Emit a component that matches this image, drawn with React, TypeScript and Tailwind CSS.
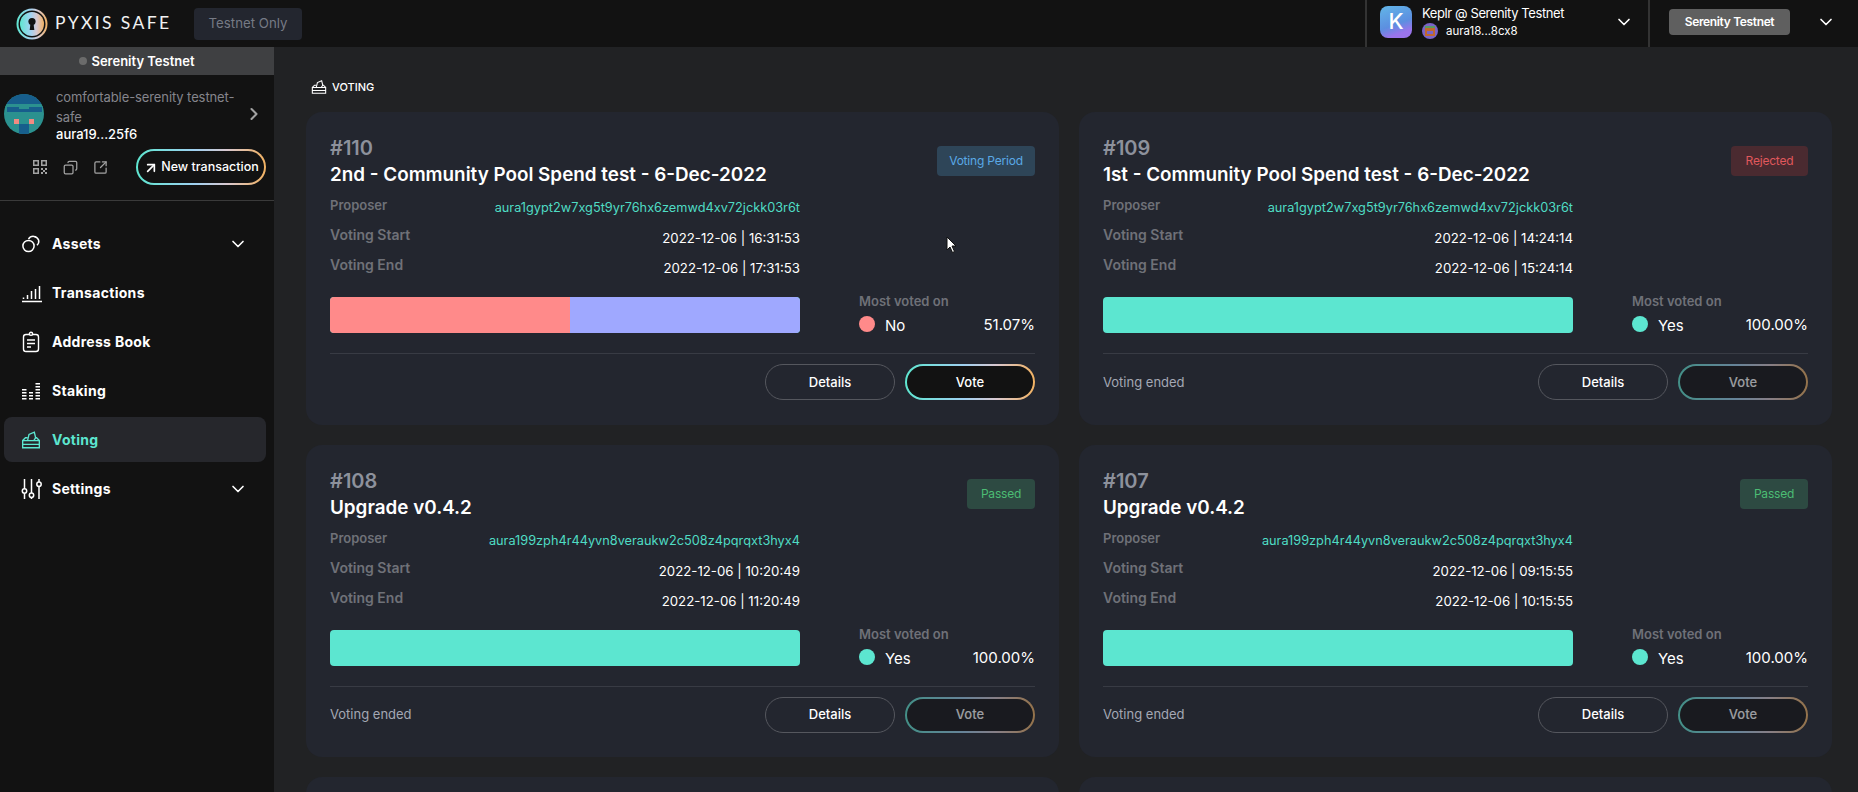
import React from 'react'
import { ChevronDown, ChevronRight, ArrowUpRight, Copy, SquareArrowOutUpRight } from 'lucide-react'

interface Proposal {
  id: number
  title: string
  status: 'Voting Period' | 'Rejected' | 'Passed'
  proposer: string
  start: string
  end: string
  choice: string
  percent: string
  active?: boolean
}

const proposals: Proposal[] = [
  { id: 110, title: '2nd - Community Pool Spend test - 6-Dec-2022', status: 'Voting Period', proposer: 'aura1gypt2w7xg5t9yr76hx6zemwd4xv72jckk03r6t', start: '2022-12-06 | 16:31:53', end: '2022-12-06 | 17:31:53', choice: 'No', percent: '51.07%', active: true },
  { id: 109, title: '1st - Community Pool Spend test - 6-Dec-2022', status: 'Rejected', proposer: 'aura1gypt2w7xg5t9yr76hx6zemwd4xv72jckk03r6t', start: '2022-12-06 | 14:24:14', end: '2022-12-06 | 15:24:14', choice: 'Yes', percent: '100.00%' },
  { id: 108, title: 'Upgrade v0.4.2', status: 'Passed', proposer: 'aura199zph4r44yvn8veraukw2c508z4pqrqxt3hyx4', start: '2022-12-06 | 10:20:49', end: '2022-12-06 | 11:20:49', choice: 'Yes', percent: '100.00%' },
  { id: 107, title: 'Upgrade v0.4.2', status: 'Passed', proposer: 'aura199zph4r44yvn8veraukw2c508z4pqrqxt3hyx4', start: '2022-12-06 | 09:15:55', end: '2022-12-06 | 10:15:55', choice: 'Yes', percent: '100.00%' },
]

const GRADIENT = 'bg-[linear-gradient(90deg,#5ee6d0_0%,#9fd0f0_45%,#d8c8d0_70%,#f2b262_100%)]'

function BallotIcon({ className }: { className?: string }) {
  return (
    <svg viewBox="0 0 18 18" fill="none" stroke="currentColor" strokeWidth="1.2" className={className}>
      <path d="M1.5 9.5 4 7h2M12.5 7H14l2.5 2.5M1.5 9.5h15v6.5h-15zM1.5 13h15" />
      <path d="M6 9.2 7.2 4l4.8-2 1.2 5-1.5 2.2" />
    </svg>
  )
}

function AssetsIcon() {
  return (
    <svg viewBox="0 0 20 20" fill="none" stroke="currentColor" strokeWidth="1.5" className="w-5 h-5">
      <circle cx="7.5" cy="12" r="5.6" />
      <path d="M7.5 5.2A5.6 5.6 0 0 1 17.6 6c.5 1.900-.1 3.800-1.600 5.200" />
    </svg>
  )
}

function TransactionsIcon() {
  return (
    <svg viewBox="0 0 22 20" fill="none" stroke="currentColor" strokeWidth="1.5" className="w-[22px] h-5">
      <path d="M1 18.500h20M2.500 16v-1.500M6.500 16v-4M10.500 16V8M14.500 16V6M18.500 16V3" />
    </svg>
  )
}

function BookIcon() {
  return (
    <svg viewBox="0 0 20 22" fill="none" stroke="currentColor" strokeWidth="1.4" className="w-5 h-[22px]">
      <rect x="2.500" y="3.500" width="15" height="17" rx="2.500" />
      <circle cx="10" cy="2.800" r="1.600" fill="#121212" />
      <path d="M6 9h8M6 12.500h8M6 16h4" />
    </svg>
  )
}

function StakingIcon() {
  return (
    <svg viewBox="0 0 20 18" fill="currentColor" className="w-5 h-[18px]">
      <path d="M1 7h4.500v1.400H1zM1 10h4.500v1.400H1zM1 13h4.500v1.400H1zM1 16h4.500v1.400H1zM8 10h4v1.400H8zM8 13h4v1.400H8zM8 16h4v1.400H8zM14.500 1H19v1.400h-4.500zM14.500 4H19v1.400h-4.500zM14.500 7H19v1.400h-4.500zM14.500 10H19v1.400h-4.500zM14.500 13H19v1.400h-4.500zM14.500 16H19v1.400h-4.500z" />
    </svg>
  )
}

function SettingsIcon() {
  return (
    <svg viewBox="0 0 22 22" fill="none" stroke="currentColor" strokeWidth="1.5" className="w-[22px] h-[22px]">
      <path d="M3.500 1v9.500M3.500 15.500V21M10.500 1v14M10.500 19.500V21M18 1v3M18 8.500V21" />
      <circle cx="3.500" cy="13" r="2.200" />
      <circle cx="10.500" cy="17.300" r="2.200" />
      <circle cx="18" cy="6.300" r="2.200" />
    </svg>
  )
}

function QrIcon() {
  return (
    <svg viewBox="0 0 14 14" fill="#a3a3a3" className="w-[14px] h-[14px]">
      <path fillRule="evenodd" d="M0 0h6v6H0zM1.500 1.500v3h3v-3zM8 0h6v6H8zM9.500 1.500v3h3v-3zM0 8h6v6H0zM1.500 9.500v3h3v-3z" />
      <path d="M8 8h2v2H8zM12 8h2v2h-2zM10 10h2v2h-2zM8 12h2v2H8zM12 12h2v2h-2z" />
    </svg>
  )
}

function Logo() {
  return (
    <svg viewBox="0 0 32 32" className="w-8 h-8 shrink-0">
      <defs>
        <linearGradient id="logoRing" x1="0" y1="0" x2="1" y2="0">
          <stop offset="0" stopColor="#5ee6d0" />
          <stop offset="0.45" stopColor="#a5d2f2" />
          <stop offset="0.7" stopColor="#d8c8d0" />
          <stop offset="1" stopColor="#f2b262" />
        </linearGradient>
      </defs>
      <circle cx="16" cy="16" r="15.500" fill="url(#logoRing)" />
      <circle cx="16" cy="16" r="13.500" fill="#121212" />
      <circle cx="16" cy="16" r="12" fill="url(#logoRing)" />
      <circle cx="16" cy="13.500" r="3.600" fill="#121212" />
      <path d="M14.500 15h3l.8 7h-4.600z" fill="#121212" />
    </svg>
  )
}

function SafeAvatar() {
  return (
    <svg viewBox="0 0 8 8" shapeRendering="crispEdges" className="w-10 h-10 rounded-full shrink-0">
      <rect width="8" height="8" fill="#2b918f" />
      <rect width="8" height="2" fill="#175e8c" />
      <rect y="2" width="8" height="1" fill="#2b918f" />
      <rect x="0.500" y="2.500" width="7" height="1" fill="#175e8c" />
      <rect x="3" y="2" width="2" height="1" fill="#2b918f" />
      <rect x="3" y="6" width="2" height="2" fill="#175e8c" />
      <rect x="2" y="5" width="1" height="1" fill="#f28b82" />
      <rect x="5" y="5" width="1" height="1" fill="#f28b82" />
    </svg>
  )
}

function WalletAvatar() {
  return (
    <svg viewBox="0 0 6 6" shapeRendering="crispEdges" className="w-4 h-4 rounded-full shrink-0">
      <rect width="6" height="6" fill="#7a64c8" />
      <rect x="1" y="1" width="4" height="1" fill="#5a9a62" />
      <rect x="1" y="2" width="4" height="3" fill="#c0682e" />
      <rect x="2" y="3" width="2" height="1" fill="#7a64c8" />
    </svg>
  )
}

function KeplrIcon() {
  return (
    <div className="w-8 h-8 rounded-lg bg-[linear-gradient(160deg,#62b6e8_0%,#5c8fe0_55%,#9a74ec_80%)] flex items-center justify-center text-white text-[22px] font-medium shrink-0">
      K
    </div>
  )
}

function NavItem({ icon, label, active, expandable }: { icon: React.ReactNode; label: string; active?: boolean; expandable?: boolean }) {
  return (
    <div className={`h-[45px] ml-1 mr-2 pl-[17px] pr-[18px] rounded-lg flex items-center ${active ? 'bg-[#26272c] text-[#5ce6d0]' : 'text-white'}`}>
      <span className="w-[31px] flex items-center">{icon}</span>
      <span className="text-[14px] font-bold tracking-[0.3px]">{label}</span>
      {expandable && <ChevronDown className="w-5 h-5 ml-auto" strokeWidth={2} />}
    </div>
  )
}

function Sidebar() {
  return (
    <aside className="w-[274px] shrink-0 bg-[#121212]">
      <div className="h-[28px] bg-[#3f4042] flex items-center justify-center gap-1">
        <span className="w-2 h-2 rounded-full bg-[#6b6b6b]" />
        <span className="text-[13px] font-semibold text-white translate-y-[1px]">Serenity Testnet</span>
      </div>
      <div className="h-[126px] border-b border-[#3a3a3a] pl-1 pt-[19px]">
        <div className="h-[48px] flex items-start">
          <SafeAvatar />
          <div className="ml-3 w-[191px] -mt-[7px]">
            <div className="text-[13px] leading-5 tracking-[-0.1px] text-[#85858c]">comfortable-serenity testnet-safe</div>
            <div className="text-[13px] leading-[15px] font-medium text-white">aura19...25f6</div>
          </div>
          <ChevronRight className="w-5 h-5 text-[#a3a3a3] mt-[10px] -ml-[3px]" strokeWidth={2.5} />
        </div>
        <div className="flex items-center mt-[7px] pl-[29px]">
          <QrIcon />
          <Copy className="w-[15px] h-[15px] text-[#a3a3a3] ml-4 -scale-x-100" />
          <SquareArrowOutUpRight className="w-[15px] h-[15px] text-[#a3a3a3] ml-[15px]" />
          <div className={`ml-[28px] p-[2px] rounded-full ${GRADIENT}`}>
            <div className="w-[126px] h-8 pt-[1px] rounded-full bg-[#121212] flex items-center justify-center gap-[2px] text-white text-[12.500px] font-medium">
              <ArrowUpRight className="w-4 h-4" strokeWidth={2.5} />
              New transaction
            </div>
          </div>
        </div>
      </div>
      <nav className="pt-[20px] flex flex-col gap-1">
        <NavItem icon={<AssetsIcon />} label="Assets" expandable />
        <NavItem icon={<TransactionsIcon />} label="Transactions" />
        <NavItem icon={<BookIcon />} label="Address Book" />
        <NavItem icon={<StakingIcon />} label="Staking" />
        <NavItem icon={<BallotIcon className="w-5 h-5" />} label="Voting" active />
        <NavItem icon={<SettingsIcon />} label="Settings" expandable />
      </nav>
    </aside>
  )
}

function StatusBadge({ status }: { status: Proposal['status'] }) {
  const styles = {
    'Voting Period': 'w-[98px] bg-[#2e4558] text-[#5aa9e6]',
    Rejected: 'w-[77px] bg-[#4a2a30] text-[#e0585c]',
    Passed: 'w-[68px] bg-[#2d4a42] text-[#4cbc74]',
  }
  return (
    <div className={`h-[30px] mt-[10px] rounded text-[12px] tracking-[-0.2px] flex items-center justify-center shrink-0 ${styles[status]}`}>
      {status}
    </div>
  )
}

function InfoRow({ label, value, accent, small }: { label: string; value: string; accent?: boolean; small?: boolean }) {
  return (
    <div className="w-[470px] h-[30px] flex justify-between">
      <span className={`font-semibold leading-[30px] text-[#6f7178] ${small ? 'text-[13px]' : 'text-[14px]'}`}>{label}</span>
      <span className={`leading-[36px] ${accent ? 'text-[12.750px] text-[#4fdcc4]' : 'text-[13.250px] text-white'}`}>{value}</span>
    </div>
  )
}

function ProposalCard({ proposal }: { proposal: Proposal }) {
  const isNo = proposal.choice === 'No'
  return (
    <div className="h-[312.5px] rounded-2xl bg-[#23262f] px-6 pt-6">
      <div className="flex justify-between">
        <div>
          <div className="text-[20px] leading-6 font-semibold text-[#8d919c]">#{proposal.id}</div>
          <div className="mt-[1px] text-[18.850px] leading-7 font-semibold text-white">{proposal.title}</div>
        </div>
        <StatusBadge status={proposal.status} />
      </div>
      <div className="mt-[1px]">
        <InfoRow label="Proposer" value={proposal.proposer} accent small />
        <InfoRow label="Voting Start" value={proposal.start} />
        <InfoRow label="Voting End" value={proposal.end} />
      </div>
      <div className="mt-[17px] h-9 flex">
        <div className="w-[470px] h-9 rounded overflow-hidden flex bg-[#5ce6d0]">
          {isNo && (
            <>
              <div className="w-[51.07%] bg-[#ff8a8a]" />
              <div className="flex-1 bg-[#9fa8ff]" />
            </>
          )}
        </div>
        <div className="ml-[59px] flex-1">
          <div className="text-[13px] leading-4 font-semibold text-[#6f7178] mt-[-4px]">Most voted on</div>
          <div className="flex items-center mt-[3px]">
            <span className={`w-4 h-4 rounded-full ${isNo ? 'bg-[#ff8a8a]' : 'bg-[#5ce6d0]'}`} />
            <span className="ml-[10px] text-[15px] leading-6 text-white translate-y-[2px]">{proposal.choice}</span>
            <span className="ml-auto text-[15px] leading-6 text-white translate-y-[1px]">{proposal.percent}</span>
          </div>
        </div>
      </div>
      <div className="mt-5 border-t border-[#383b44] pt-[10px] flex items-center">
        {!proposal.active && <span className="text-[13px] text-[#a4a8b4] pt-[1px]">Voting ended</span>}
        <div className="ml-auto w-[130px] h-9 pt-[1px] rounded-full border border-[#55575e] flex items-center justify-center text-[13px] font-medium text-white">
          Details
        </div>
        <div className={`ml-[10px] p-[2px] rounded-full ${GRADIENT} ${proposal.active ? '' : 'opacity-55'}`}>
          <div className="w-[126px] h-8 pt-[1px] rounded-full bg-[#121212] flex items-center justify-center text-[13px] font-medium text-white">
            Vote
          </div>
        </div>
      </div>
    </div>
  )
}

export default function App() {
  return (
    <div className="h-[792px] overflow-hidden flex flex-col bg-[#212224] font-['Inter',sans-serif]">
      {/* Top bar */}
      <header className="h-[47px] shrink-0 bg-[#121212] flex items-center pl-4">
        <Logo />
        <span className="ml-[7px] w-[118px] text-[17.500px] text-[#f2f2f2] font-['Lato',sans-serif] tracking-[2.4px] whitespace-nowrap">PYXIS SAFE</span>
        <div className="ml-[21px] w-[108px] h-8 rounded bg-[#23262f] flex items-center justify-center text-[13.250px] text-[#767a85]">
          Testnet Only
        </div>
        <div className="ml-auto h-full flex items-center">
          <div className="w-[2px] h-full bg-[#333333]" />
          <div className="w-[281px] -mt-1 pl-[13px] flex items-center">
            <KeplrIcon />
            <div className="ml-[10px]">
              <div className="text-[13px] leading-[17px] tracking-[-0.4px] text-white">Keplr @ Serenity Testnet</div>
              <div className="flex items-center mt-[1px]">
                <WalletAvatar />
                <span className="ml-2 text-[11.500px] leading-4 text-white">aura18...8cx8</span>
              </div>
            </div>
            <ChevronDown className="w-5 h-5 text-white ml-auto mr-[14px]" />
          </div>
          <div className="w-[2px] h-full bg-[#333333]" />
          <div className="w-[208px] -mt-1 pl-[19px] flex items-center">
            <div className="w-[121px] h-[26px] rounded bg-[#5f5f5f] flex items-center justify-center text-[12px] tracking-[-0.35px] font-semibold text-white">
              Serenity Testnet
            </div>
            <ChevronDown className="w-5 h-5 text-white ml-[26px]" />
          </div>
        </div>
      </header>

      <div className="flex-1 min-h-0 flex relative">
        <Sidebar />
        <main className="flex-1 min-w-0 pl-8 pr-[26px] pt-[31px]">
          <div className="h-[18px] flex items-center gap-[5px] text-white pl-[5px]">
            <BallotIcon className="w-4 h-4" />
            <span className="text-[11px] font-medium">VOTING</span>
          </div>
          <div className="mt-4 grid grid-cols-2 gap-x-5 gap-y-5">
            {proposals.map(p => (
              <ProposalCard key={p.id} proposal={p} />
            ))}
            <div className="h-[312px] rounded-2xl bg-[#23262f]" />
            <div className="h-[312px] rounded-2xl bg-[#23262f]" />
          </div>
        </main>
        {/* mouse pointer captured in the screenshot */}
        <svg viewBox="0 0 12 18" className="absolute left-[946px] top-[189px] w-3 h-[18px]">
          <path d="M1 1v13l3-3 2.500 5.500 2-1L6 10h4z" fill="#fff" stroke="#111" strokeWidth="1" />
        </svg>
      </div>
    </div>
  )
}
